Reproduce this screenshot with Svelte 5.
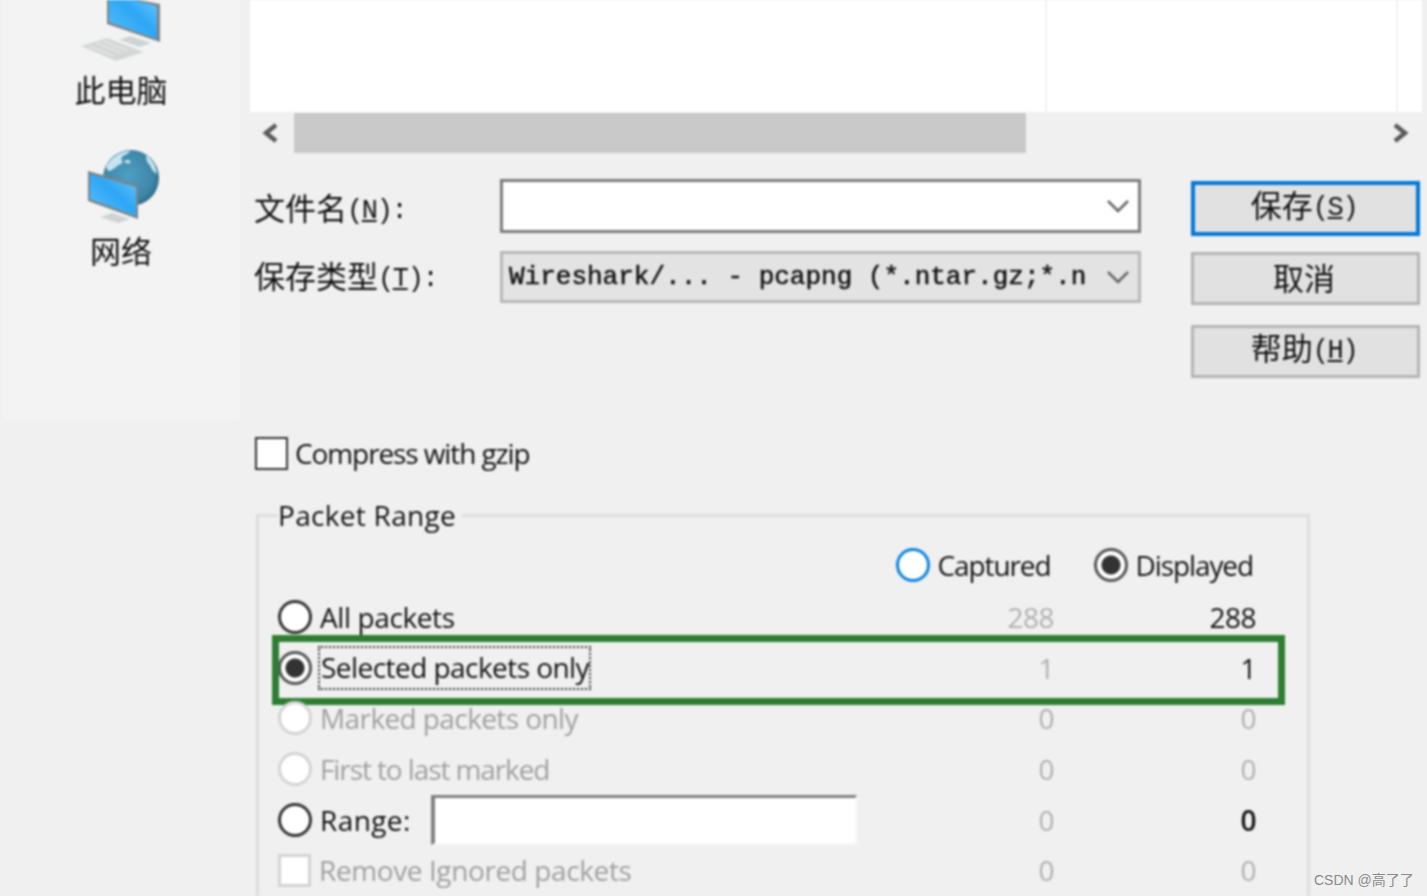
<script lang="ts">
  // track: per-label letter spacing, Open Sans runs wider or narrower than the original UI font
  const rows = [
    { label: 'All packets', captured: '288', displayed: '288', active: true, track: -0.4 },
    { label: 'Selected packets only', captured: '1', displayed: '1', active: true, checked: true, track: -0.55 },
    { label: 'Marked packets only', captured: '0', displayed: '0', active: false, track: -0.6 },
    { label: 'First to last marked', captured: '0', displayed: '0', active: false, track: -1.1 }
  ];
</script>

<div class="page">
  <aside class="side">
    <svg class="pc" viewBox="76 0 90 62" width="90" height="62" aria-hidden="true">
      <defs>
        <linearGradient id="screen" x1="0" y1="1" x2="1" y2="0">
          <stop offset="0" stop-color="#5cc0f8" />
          <stop offset="0.55" stop-color="#2ea6f6" />
          <stop offset="1" stop-color="#6cc8fa" />
        </linearGradient>
      </defs>
      <polygon points="81,46 107,38 144,52 116,61" fill="#d4d6d6" />
      <path d="M89 46l25 10M96 43l25 10M103 41l25 10" stroke="#eceeee" stroke-width="1.2" />
      <polygon points="119,40 130,36 151,43 140,47" fill="#cfd3d5" />
      <polygon points="107,-6 160,4 160,42 107,24" fill="#7b8488" />
      <polygon points="109,-6 157,6 157,39 109,22" fill="url(#screen)" />
    </svg>
    <div class="place">此电脑</div>
    <svg class="net" viewBox="82 146 78 78" width="78" height="78" aria-hidden="true">
      <defs>
        <radialGradient id="globe" cx="0.45" cy="0.45" r="0.6">
          <stop offset="0" stop-color="#4d9fc4" />
          <stop offset="0.75" stop-color="#3f86a8" />
          <stop offset="1" stop-color="#2b6580" />
        </radialGradient>
      </defs>
      <circle cx="131" cy="177" r="28" fill="url(#globe)" />
      <path d="M106 166c4-9 14-16 24-16-2 4-8 4-9 8 3 2 1 6-3 6-2 3-6 4-8 6-2 0-3-2-4-4zM146 154c6 4 10 11 11 19-4-2-6-6-7-9-3-2-4-6-4-10zM124 160c3-2 6-1 7 1-2 2-5 2-7-1z" fill="#c8e4ef" />
      <polygon points="100,216 112,212 130,218 118,222" fill="#cfd3d5" />
      <polygon points="88,170 138,184 138,218 88,200" fill="#7b8488" />
      <polygon points="90,173 136,186 136,215 90,198" fill="url(#screen)" />
    </svg>
    <div class="place">网络</div>
  </aside>

  <main class="main">
    <div class="list">
      <span class="sep one"></span>
      <span class="sep two"></span>
    </div>

    <div class="scroll">
      <svg class="arrow" viewBox="0 0 18 22" width="18" height="22" aria-hidden="true">
        <path d="M15 3 5 11l10 8" />
      </svg>
      <div class="track"><div class="thumb"></div></div>
      <svg class="arrow" viewBox="0 0 18 22" width="18" height="22" aria-hidden="true">
        <path d="M3 3l10 8-10 8" />
      </svg>
    </div>

    <div class="form">
      <div class="fields">
        <div class="field">
          <span class="cap">文件名<span class="mn">(<u>N</u>):</span></span>
          <div class="combo edit">
            <svg class="chev" viewBox="0 0 24 14" width="24" height="14" aria-hidden="true"><path d="M2 2l10 10L22 2" /></svg>
          </div>
        </div>
        <div class="field second">
          <span class="cap">保存类型<span class="mn">(<u>T</u>):</span></span>
          <div class="combo ro">
            <span class="type">Wireshark/... - pcapng (*.ntar.gz;*.n</span>
            <svg class="chev" viewBox="0 0 24 14" width="24" height="14" aria-hidden="true"><path d="M2 2l10 10L22 2" /></svg>
          </div>
        </div>
      </div>
      <div class="buttons">
        <button class="btn primary">保存<span class="mn">(<u>S</u>)</span></button>
        <button class="btn cancel">取消</button>
        <button class="btn help">帮助<span class="mn">(<u>H</u>)</span></button>
      </div>
    </div>

    <div class="compress">
      <span class="box"></span>
      <span>Compress with gzip</span>
    </div>

    <fieldset class="group">
      <legend>Packet Range</legend>
      <div class="head">
        <span class="opt"><span class="radio blue"></span>Captured</span>
        <span class="opt"><span class="radio on"></span>Displayed</span>
      </div>

      {#each rows as row}
        <div class="row" class:off={!row.active}>
          <span class="opt">
            <span class="radio" class:on={row.checked} class:dim={!row.active}></span>
            <span class:focus={row.checked} style:letter-spacing="{row.track}px">{row.label}</span>
          </span>
          <span class="num dim-num">{row.captured}</span>
          <span class="num" class:dim-num={!row.active}>{row.displayed}</span>
          {#if row.checked}<span class="mark"></span>{/if}
        </div>
      {/each}

      <div class="row">
        <span class="opt">
          <span class="radio"></span>
          <span class="range-label">Range:</span>
          <span class="range"></span>
        </span>
        <span class="num dim-num">0</span>
        <span class="num strong">0</span>
      </div>

      <div class="row off">
        <span class="opt">
          <span class="box small"></span>
          <span class="remove-label">Remove Ignored packets</span>
        </span>
        <span class="num dim-num">0</span>
        <span class="num dim-num">0</span>
      </div>
    </fieldset>
  </main>
</div>
<div class="mark-text">CSDN @高了了</div>

<style>
  :global(body) {
    margin: 0;
    background: #f0f0f0;
    overflow: hidden;
  }

  .page {
    display: flex;
    width: 1427px;
    height: 896px;
    overflow: hidden;
    background: #f0f0f0;
    color: #111;
    font-family: "Open Sans", "Noto Sans CJK SC", sans-serif;
    filter: blur(0.85px);
  }

  .side {
    display: flex;
    flex-direction: column;
    align-items: center;
    flex: none;
    width: 238px;
    height: 420px;
    margin-left: 2px;
    background: #f3f3f3;
  }

  .place {
    font-family: "Noto Sans CJK SC", sans-serif;
    font-size: 31px;
    line-height: 36px;
  }

  .pc {
    margin-bottom: 9px;
  }

  .net {
    margin-top: 40px;
    margin-bottom: 7px;
  }

  .main {
    flex: 1;
    min-width: 0;
    padding: 0 5px 0 10px;
  }

  .list {
    position: relative;
    height: 112px;
    background: #fff;
  }

  .sep {
    position: absolute;
    top: 0;
    bottom: 0;
    width: 2px;
    background: #eef2f8;
  }

  .sep.one {
    left: 795px;
  }

  .sep.two {
    left: 1146px;
  }

  .scroll {
    display: flex;
    align-items: center;
    height: 40px;
    margin-top: 1px;
    padding-right: 12px;
  }

  .arrow {
    flex: none;
    margin-left: 11px;
    fill: none;
    stroke: #5a5a5a;
    stroke-width: 4.5;
  }

  .track {
    flex: 1;
    height: 40px;
    margin-left: 15px;
  }

  .thumb {
    width: 732px;
    height: 100%;
    background: #c9c9c9;
  }

  .form {
    display: flex;
    gap: 50px;
    margin-top: 26px;
    padding-left: 4px;
  }

  .fields {
    width: 887px;
  }

  .field {
    display: flex;
    align-items: center;
  }

  .field.second {
    align-items: flex-start;
    margin-top: 18px;
  }

  .field.second .cap {
    line-height: 48px;
  }

  .cap {
    flex: none;
    width: 246px;
    font-family: "Noto Sans CJK SC", sans-serif;
    font-size: 31px;
    font-weight: 400;
  }

  .mn {
    position: relative;
    top: -2px;
    font-family: "Liberation Mono", monospace;
    font-size: 27px;
    letter-spacing: -1.4px;
  }

  .combo {
    display: flex;
    align-items: center;
    justify-content: space-between;
    box-sizing: border-box;
    width: 641px;
    padding: 0 8px 0 6px;
  }

  .combo.edit {
    justify-content: flex-end;
    height: 54px;
    background: #fff;
    border: 3px solid #7c7c7c;
  }

  .combo.ro {
    height: 52px;
    background: #e3e3e3;
    border: 3px solid #b8b8b8;
  }

  .type {
    font-family: "Liberation Mono", monospace;
    font-size: 26px;
    color: #111;
    -webkit-text-stroke: 0.5px #111;
    white-space: pre;
  }

  .chev {
    flex: none;
    fill: none;
    stroke: #666;
    stroke-width: 2.5;
  }

  .buttons {
    display: flex;
    flex-direction: column;
    width: 229px;
    margin-top: 2px;
  }

  .btn {
    box-sizing: border-box;
    width: 100%;
    height: 53px;
    padding: 0 3px 5px 0;
    background: #e1e1e1;
    border: 3px solid #b4b4b4;
    color: #111;
    font-family: "Noto Sans CJK SC", sans-serif;
    font-size: 31px;
    font-weight: 400;
    line-height: 1;
  }

  .btn.primary {
    height: 55px;
    border: 4px solid #0078d7;
  }

  .btn.cancel {
    margin-top: 16px;
  }

  .btn.help {
    margin-top: 20px;
  }

  .compress {
    display: flex;
    align-items: center;
    gap: 7px;
    height: 33px;
    margin-top: 59px;
    padding-left: 5px;
    font-size: 28px;
    letter-spacing: -1.1px;
  }

  .compress span:last-child {
    padding-bottom: 2px;
  }

  .box {
    flex: none;
    box-sizing: border-box;
    width: 33px;
    height: 33px;
    background: #fff;
    border: 2px solid #333;
  }

  .box.small {
    border: 3px solid #d4d4d4;
  }

  .group {
    box-sizing: border-box;
    width: 1054px;
    min-width: 0;
    margin: 28px 0 0 6px;
    padding: 16px 51px 60px 19px;
    border: 3px solid #dedede;
    font-size: 28px;
    letter-spacing: -1.1px;
  }

  legend {
    padding: 0 6px 0 0;
    height: 34px;
    line-height: 34px;
    letter-spacing: 0.3px;
  }

  .head {
    display: flex;
    justify-content: flex-end;
    gap: 43px;
    height: 34px;
    margin-bottom: 10px;
    padding-right: 3px;
  }

  .opt {
    display: flex;
    align-items: center;
    gap: 8px;
    min-width: 0;
  }

  .radio {
    flex: none;
    box-sizing: border-box;
    display: block;
    width: 34px;
    height: 34px;
    background: #fff;
    border: 3px solid #333;
    border-radius: 50%;
  }

  .radio.on {
    background: radial-gradient(circle, #333 0 9px, #fff 10px);
    border-color: #555;
  }

  .radio.blue {
    border-color: #0a84e0;
  }

  .radio.dim {
    border-color: #d4d4d4;
  }

  .row {
    position: relative;
    display: grid;
    grid-template-columns: 1fr 160px 202px;
    align-items: center;
    height: 50.6px;
  }

  .off {
    color: #a0a0a0;
  }

  .num {
    text-align: right;
    letter-spacing: -0.5px;
  }

  .dim-num {
    color: #b0b0b0;
  }

  .strong {
    font-weight: 600;
    color: #111;
  }

  .focus {
    padding: 0 0 2px 1px;
    outline: 2px dotted #333;
  }

  .range-label {
    letter-spacing: 0.4px;
  }

  .remove-label {
    letter-spacing: -0.4px;
  }

  .mark {
    position: absolute;
    left: -6px;
    right: -29px;
    top: -8px;
    bottom: -12px;
    border: 7px solid #2e7d32;
    pointer-events: none;
  }

  .range {
    box-sizing: border-box;
    display: block;
    width: 426px;
    height: 50px;
    margin-left: 12px;
    background: #fff;
    border-style: solid;
    border-width: 3px 2px 2px 4px;
    border-color: #808080 #f8f8f8 #f8f8f8 #808080;
  }

  .mark-text {
    position: absolute;
    left: 1314px;
    top: 871px;
    color: #8a8a8a;
    font-family: "Liberation Sans", "Noto Sans CJK SC", sans-serif;
    font-size: 14px;
    line-height: 18px;
    white-space: nowrap;
  }
</style>
